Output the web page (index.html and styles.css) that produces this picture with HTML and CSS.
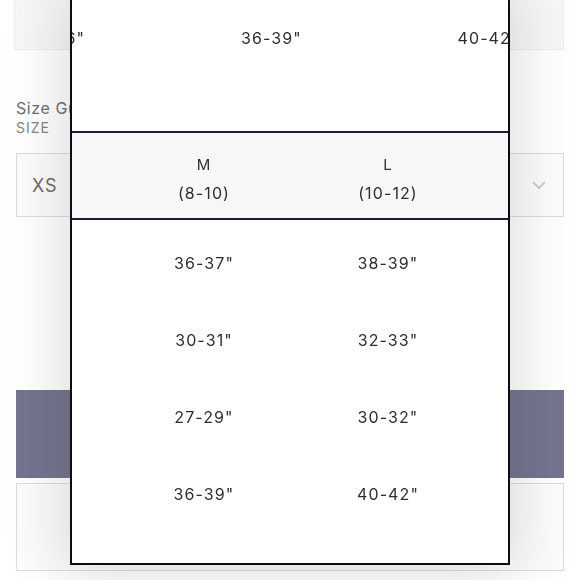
FILE: index.html
```html
<!DOCTYPE html>
<html>
<head>
<meta charset="utf-8">
<link rel="stylesheet" href="styles.css">
</head>
<body>
<div class="page">
  <div class="top-box"></div>
  <div class="guide-link">Size Guide</div>
  <div class="field-label">SIZE</div>
  <div class="select">
    <span class="select-value">XS</span>
    <svg class="chevron" width="16" height="10" viewBox="0 0 16 10"><path d="M2 2 L8 8 L14 2" fill="none" stroke="#c4c4c4" stroke-width="1.6"/></svg>
  </div>
  <div class="btn-primary"></div>
  <div class="btn-secondary"></div>
</div>

<div class="modal">
  <div class="prev-table">
    <div class="prev-row">
      <div class="prev-cell">34-36"</div>
      <div class="prev-cell">36-39"</div>
      <div class="prev-cell">40-42"</div>
    </div>
  </div>
  <div class="size-table">
    <div class="head-row">
      <div class="cell"><span class="size-name">M</span><span>(8-10)</span></div>
      <div class="cell"><span class="size-name">L</span><span>(10-12)</span></div>
    </div>
    <div class="body">
      <div class="row"><div class="cell">36-37"</div><div class="cell">38-39"</div></div>
      <div class="row"><div class="cell">30-31"</div><div class="cell">32-33"</div></div>
      <div class="row"><div class="cell">27-29"</div><div class="cell">30-32"</div></div>
      <div class="row"><div class="cell">36-39"</div><div class="cell">40-42"</div></div>
    </div>
  </div>
</div>
</body>
</html>
```
FILE: styles.css
```css
html, body {
  margin: 0;
  padding: 0;
  background: #ffffff;
  font-family: Inter, "Noto Sans", sans-serif;
  overflow: hidden;
  height: 580px;
}

.page {
  padding: 0 16px;
  display: flex;
  flex-direction: column;
}

.top-box {
  height: 50px;
  margin-left: -2px;
  background: #f7f7f7;
  border: 1px solid #ececec;
  border-top: none;
  box-sizing: border-box;
}

.guide-link {
  margin-top: 49px;
  font-size: 16px;
  line-height: 18px;
  color: #707070;
  letter-spacing: 0.6px;
}

.field-label {
  margin-top: 3px;
  font-size: 14px;
  line-height: 16px;
  color: #858585;
  letter-spacing: 1px;
}

.select {
  margin-top: 17px;
  height: 64px;
  border: 1px solid #dcdcdc;
  box-sizing: border-box;
  display: flex;
  align-items: center;
  justify-content: space-between;
  padding: 0 16px 0 15px;
  background: #fcfcfc;
}

.select-value {
  font-size: 18px;
  color: #6a6a6a;
  letter-spacing: 1px;
}

.chevron {
  display: block;
}

.btn-primary {
  margin-top: 173px;
  height: 88px;
  background: #767590;
}

.btn-secondary {
  margin-top: 5px;
  height: 88px;
  border: 1px solid #dcdcdc;
  box-sizing: border-box;
  background: #fcfcfc;
}

.modal {
  position: fixed;
  left: 70px;
  top: -2px;
  width: 436px;
  height: 563px;
  border: 2px solid #0c0c14;
  background: #ffffff;
  box-shadow: 0 0 55px 10px rgba(0, 0, 0, 0.13);
  display: flex;
  flex-direction: column;
  overflow: hidden;
  color: #2e2e2e;
}

.prev-table {
  height: 133px;
  overflow: hidden;
  border-bottom: 2px solid #1c1b3a;
  box-sizing: border-box;
}

.prev-row {
  display: flex;
  margin-left: -126px;
  padding-top: 28px;
}

.prev-cell {
  flex: 0 0 217px;
  text-align: center;
  font-size: 16px;
  line-height: 20px;
  letter-spacing: 1.1px;
}

.size-table {
  display: flex;
  flex-direction: column;
}

.head-row {
  display: flex;
  height: 87px;
  background: #f7f7f7;
  border-bottom: 2px solid #1c1b3a;
  box-sizing: border-box;
  padding-left: 40px;
  align-items: center;
}

.head-row .cell {
  display: flex;
  flex-direction: column;
  align-items: center;
  gap: 8px;
  padding-top: 6px;
}

.size-name {
  font-size: 15px;
}

.cell {
  flex: 0 0 184px;
  text-align: center;
  font-size: 16px;
  line-height: 20px;
  letter-spacing: 1.1px;
}

.body {
  padding-top: 4px;
  display: flex;
  flex-direction: column;
}

.row {
  display: flex;
  height: 77px;
  align-items: center;
  padding-left: 40px;
}
```
